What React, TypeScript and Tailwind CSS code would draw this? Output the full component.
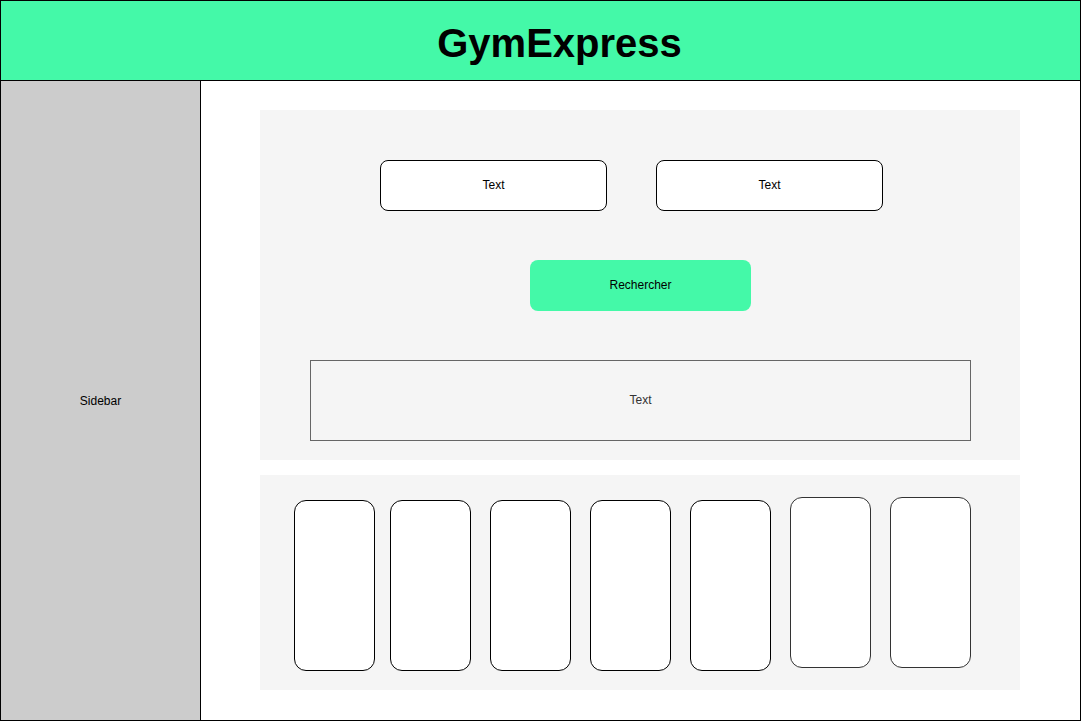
import React from "react";

const font = { fontFamily: '"Liberation Sans", Arial, Helvetica, sans-serif' };

function Card({ cls }: { cls: string }) {
  return <div className={`w-[81px] h-[171px] shrink-0 rounded-[12px] border bg-white ${cls}`} />;
}

export default function App() {
  return (
    <div style={font} className="w-[1081px] h-[721px] border border-black flex flex-col bg-white text-black">
      <header className="h-[80px] shrink-0 bg-[#44f9a8] border-b border-black flex items-center justify-center pl-[38px]">
        <h1 className="text-[40px] font-bold leading-none mt-[5px]">GymExpress</h1>
      </header>
      <div className="flex flex-1 min-h-0">
        <aside className="w-[200px] shrink-0 bg-[#cccccc] border-r border-black flex items-center justify-center text-[12px]">
          Sidebar
        </aside>
        <main className="flex-1 flex flex-col pl-[59px] pt-[29px]">
          <section className="w-[760px] h-[350px] bg-[#f5f5f5] flex flex-col pt-[50px]">
            <div className="flex pl-[120px] gap-[49px]">
              <div className="w-[227px] h-[51px] rounded-[8px] border border-black bg-white flex items-center justify-center text-[12px] pb-[2px]">
                Text
              </div>
              <div className="w-[227px] h-[51px] rounded-[8px] border border-black bg-white flex items-center justify-center text-[12px] pb-[2px]">
                Text
              </div>
            </div>
            <div className="pl-[270px] mt-[49px]">
              <button className="w-[221px] h-[51px] rounded-[8px] bg-[#44f9a8] flex items-center justify-center text-[12px] pb-[2px]">
                Rechercher
              </button>
            </div>
            <div className="ml-[50px] mt-[49px] w-[661px] h-[81px] border border-[#666666] flex items-center justify-center text-[12px] text-[#333333] pb-[2px]">
              Text
            </div>
          </section>
          <section className="w-[760px] h-[215px] mt-[15px] bg-[#f5f5f5] flex items-start pl-[34px] pt-[25px]">
            <Card cls="border-black" />
            <Card cls="border-black ml-[15px]" />
            <Card cls="border-black ml-[19px]" />
            <Card cls="border-black ml-[19px]" />
            <Card cls="border-black ml-[19px]" />
            <Card cls="ml-[19px] -mt-[3px] border-[#333333]" />
            <Card cls="ml-[19px] -mt-[3px] border-[#333333]" />
          </section>
        </main>
      </div>
    </div>
  );
}
